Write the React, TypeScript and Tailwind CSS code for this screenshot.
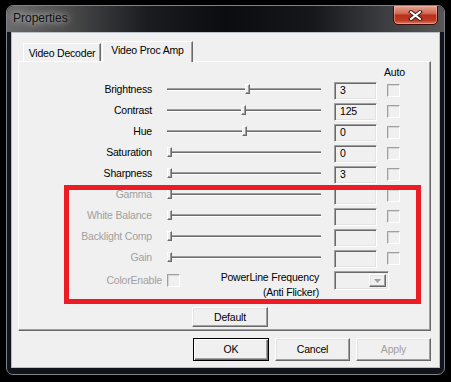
import React from 'react';

type Row = { label: string; value?: string; thumb: number; disabled?: boolean };

const rows: Row[] = [
  { label: 'Brightness', value: '3', thumb: 78 },
  { label: 'Contrast', value: '125', thumb: 74 },
  { label: 'Hue', value: '0', thumb: 75 },
  { label: 'Saturation', value: '0', thumb: 0 },
  { label: 'Sharpness', value: '3', thumb: 0 },
  { label: 'Gamma', thumb: 0, disabled: true },
  { label: 'White Balance', thumb: 0, disabled: true },
  { label: 'Backlight Comp', thumb: 0, disabled: true },
  { label: 'Gain', thumb: 0, disabled: true },
];

const sunken =
  'border border-t-[#a0a0a0] border-l-[#a0a0a0] border-b-white border-r-white shadow-[inset_1px_1px_0_#696969,inset_-1px_-1px_0_#e3e3e3]';
const raised =
  'border border-t-white border-l-white border-b-[#696969] border-r-[#696969] shadow-[inset_-1px_-1px_0_#a0a0a0,inset_1px_1px_0_#e3e3e3]';
const check =
  'w-[13px] h-[13px] border border-t-[#a0a0a0] border-l-[#a0a0a0] border-b-white border-r-white shadow-[inset_1px_1px_0_#d6d6d6]';

function Slider({ thumb }: { thumb: number }) {
  return (
    <div className="relative w-[154px] h-[21px] flex items-center ml-[15px]">
      <div className="w-full h-[3px] -mt-[2px] border-t border-t-[#a0a0a0] border-b border-b-white bg-[#6d6d6d]" />
      <div
        className="absolute top-[4px] w-[5px] h-[10px] bg-[#f0f0f0] border border-t-white border-l-white border-b-[#696969] border-r-[#696969] shadow-[inset_-1px_-1px_0_#a0a0a0]"
        style={{ left: thumb }}
      />
    </div>
  );
}

function Btn({ label, def, disabled, className }: { label: string; def?: boolean; disabled?: boolean; className?: string }) {
  return (
    <div
      className={`flex items-center justify-center bg-[#f0f0f0] ${
        def
          ? 'border border-black shadow-[inset_1px_1px_0_#fff,inset_-1px_-1px_0_#696969,inset_-2px_-2px_0_#a0a0a0]'
          : raised
      } ${disabled ? 'text-[#a0a0a0]' : 'text-black'} ${className ?? ''}`}
    >
      {label}
    </div>
  );
}

export default function App() {
  return (
    <div className="relative w-[451px] h-[382px] bg-black pt-[5px] pl-[6px] font-['Liberation_Sans',Arial,sans-serif] text-[10.5px] tracking-[-0.2px] leading-[13px] text-black">
      <div className="w-[439px] h-[370px] rounded-[7px] overflow-hidden border border-[#7d8389] bg-[#11141a] flex flex-col">
        {/* title bar */}
        <div className="h-[26px] flex items-start justify-between pl-[6px] pr-[6px] bg-[linear-gradient(90deg,#6a6a6a_0%,#4a4a4a_14%,#1a1c20_32%,#0a0c10_50%,#15171b_70%,#3c3d40_86%,#575757_100%)]">
          <span className="mt-[5px] text-[12px] tracking-normal leading-[15px] text-[#111] [text-shadow:0_0_6px_rgba(255,255,255,0.7),0_0_12px_rgba(255,255,255,0.5)]">
            Properties
          </span>
          <div className="-mt-[1px] w-[45px] h-[20px] rounded-b-[5px] border border-[#3a0e08] bg-[linear-gradient(180deg,#e6a091_0%,#d56a55_40%,#b8301b_52%,#bf3a24_80%,#dc7b64_100%)] shadow-[inset_0_0_0_1px_rgba(255,200,190,0.45)] flex items-center justify-center">
            <svg width="15" height="11" viewBox="0 0 15 11">
              <path d="M3 2 L12 9 M12 2 L3 9" stroke="#3b1a14" strokeWidth="4" strokeLinecap="square" />
              <path d="M3 2 L12 9 M12 2 L3 9" stroke="#ffffff" strokeWidth="2" strokeLinecap="square" />
            </svg>
          </div>
        </div>

        {/* client area */}
        <div className="mx-[4px] mb-[6px] flex-1 flex flex-col bg-[#f0f0f0] border border-[#b9bfc6] pt-[8px] pl-[6px]">
          {/* tabs */}
          <div className="flex items-end h-[20px] pl-[5px]">
            <div className="w-[78px] h-[18px] pt-[1px] flex items-center justify-center border-t border-l border-t-white border-l-white border-r border-r-[#696969] shadow-[inset_-1px_0_0_#a0a0a0]">
              Video Decoder
            </div>
            <div className="relative z-10 ml-[1px] -mb-[1px] w-[91px] h-[21px] pb-[3px] flex items-center justify-center bg-[#f0f0f0] border-t border-l border-t-white border-l-white border-r border-r-[#696969] shadow-[inset_-1px_0_0_#a0a0a0]">
              Video Proc Amp
            </div>
          </div>

          {/* panel */}
          <div className="w-[413px] h-[270px] flex flex-col border border-t-white border-l-white border-b-[#696969] border-r-[#696969] shadow-[inset_-1px_-1px_0_#a0a0a0]">
            <div className="h-[18px] pt-[4px] pl-[365px]">Auto</div>
            {rows.map((r) => (
              <div key={r.label} className="flex items-center h-[21px]">
                <div className={`w-[133px] -mt-[2px] text-right ${r.disabled ? 'text-[#a0a0a0]' : ''}`}>{r.label}</div>
                <Slider thumb={r.thumb} />
                <div className={`ml-[13px] w-[43px] h-[18px] pl-[5px] flex items-center bg-[#f0f0f0] ${sunken}`}>
                  {r.value}
                </div>
                <div className={`ml-[10px] ${check}`} />
              </div>
            ))}
            <div className="flex items-start h-[31px]">
              <div className="w-[143px] mt-[5px] text-right text-[#a0a0a0]">ColorEnable</div>
              <div className={`ml-[5px] mt-[5px] ${check}`} />
              <div className="w-[139px] mt-[1px] text-right leading-[15px]">
                <div>PowerLine Frequency</div>
                <div>(Anti Flicker)</div>
              </div>
              <div className={`ml-[15px] mt-[2px] w-[55px] h-[19px] flex justify-end items-stretch p-[2px] ${sunken}`}>
                <div className={`w-[17px] flex items-center justify-center bg-[#f0f0f0] ${raised}`}>
                  <svg width="7" height="4" viewBox="0 0 7 4">
                    <path d="M0 0 H7 L3.5 4 Z" fill="#a0a0a0" />
                  </svg>
                </div>
              </div>
            </div>
            <Btn label="Default" className="ml-[173px] mt-[7px] w-[76px] h-[20px]" />
          </div>

          {/* dialog buttons */}
          <div className="flex mt-[7px] pl-[175px] gap-[6px]">
            <Btn label="OK" def className="w-[76px] h-[23px]" />
            <Btn label="Cancel" className="w-[75px] h-[23px]" />
            <Btn label="Apply" disabled className="w-[75px] h-[23px]" />
          </div>
        </div>
      </div>

      {/* red annotation box */}
      <div className="absolute left-[64px] top-[185px] w-[357px] h-[119px] border-[5px] border-[#ed1c24]" />
    </div>
  );
}
